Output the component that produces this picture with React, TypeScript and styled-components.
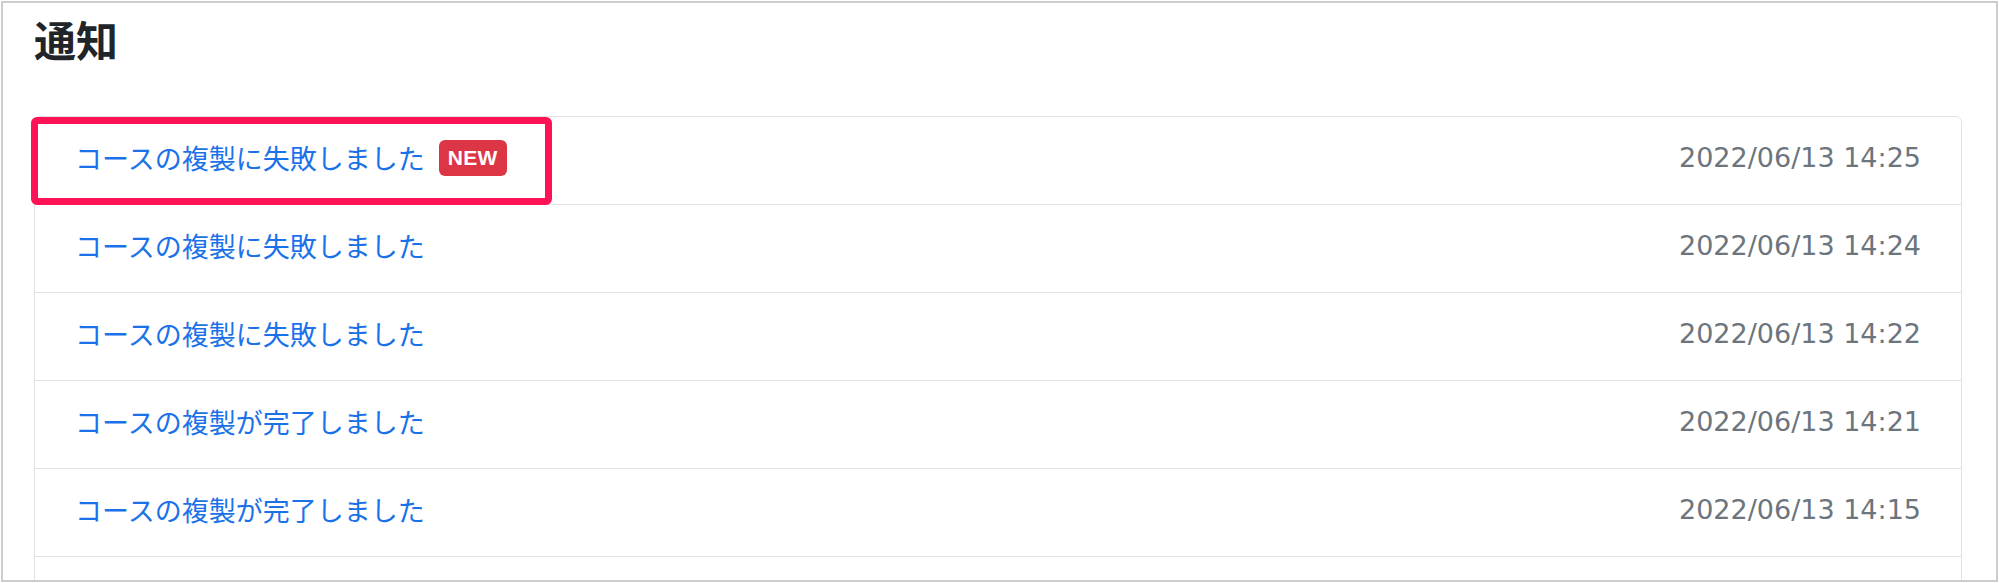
import React from "react";
import styled, { createGlobalStyle } from "styled-components";

interface Notice {
    title: string;
    date: string;
    isNew?: boolean;
}

const notices: Notice[] = [
    { title: "コースの複製に失敗しました", date: "2022/06/13 14:25", isNew: true },
    { title: "コースの複製に失敗しました", date: "2022/06/13 14:24" },
    { title: "コースの複製に失敗しました", date: "2022/06/13 14:22" },
    { title: "コースの複製が完了しました", date: "2022/06/13 14:21" },
    { title: "コースの複製が完了しました", date: "2022/06/13 14:15" },
    { title: "コースの複製が完了しました", date: "2022/06/13 14:10" },
];

const GlobalStyle = createGlobalStyle`
    html, body {
        margin: 0;
        padding: 0;
        background: #ffffff;
    }
    body {
        font-family: "Noto Sans CJK JP", "Noto Sans", sans-serif;
    }
`;

const Frame = styled.div`
    box-sizing: border-box;
    margin: 1px;
    height: 581px;
    border: 2px solid #cdcdcd;
    padding: 0 34px 0 31px;
    overflow: hidden;
    background: #ffffff;
`;

const Title = styled.h1`
    margin: 15px 0 56px 0;
    font-family: "Noto Sans CJK JP", sans-serif;
    font-size: 42px;
    line-height: 42px;
    font-weight: 700;
    color: #212529;
`;

const Card = styled.div`
    border: 1px solid #e2e2e2;
    border-radius: 6px;
    background: #ffffff;
`;

const Row = styled.div`
    position: relative;
    box-sizing: border-box;
    display: flex;
    align-items: center;
    justify-content: space-between;
    height: 88px;
    padding: 0 40px 6px 40px;
    border-bottom: 1px solid #e2e2e2;
`;

const TitleCell = styled.div`
    display: flex;
    align-items: center;
    gap: 14px;
`;

const Link = styled.a`
    font-family: "Noto Sans CJK JP", sans-serif;
    font-size: 27px;
    color: #1b72e8;
    text-decoration: none;
    cursor: pointer;
`;

const Badge = styled.span`
    display: inline-flex;
    align-items: center;
    justify-content: center;
    width: 68px;
    height: 36px;
    border-radius: 6px;
    background: #dc3545;
    color: #ffffff;
    font-family: "Liberation Sans", Arial, sans-serif;
    font-weight: 700;
    font-size: 21px;
    letter-spacing: 0.3px;
`;

const DateText = styled.span`
    font-family: "DejaVu Sans", "Noto Sans CJK JP", sans-serif;
    font-size: 27px;
    color: #6c757d;
`;

// annotation box drawn over the first row
const Highlight = styled.div`
    position: absolute;
    left: -4px;
    top: 0;
    width: 521px;
    height: 88px;
    box-sizing: border-box;
    border: 7px solid #ff1256;
    border-radius: 6px;
    pointer-events: none;
`;

export default function App() {
    return (
        <>
            <GlobalStyle />
            <Frame>
                <Title>通知</Title>
                <Card>
                    {notices.map((n, i) => (
                        <Row key={i}>
                            <TitleCell>
                                <Link>{n.title}</Link>
                                {n.isNew && <Badge>NEW</Badge>}
                            </TitleCell>
                            <DateText>{n.date}</DateText>
                            {n.isNew && <Highlight />}
                        </Row>
                    ))}
                </Card>
            </Frame>
        </>
    );
}
